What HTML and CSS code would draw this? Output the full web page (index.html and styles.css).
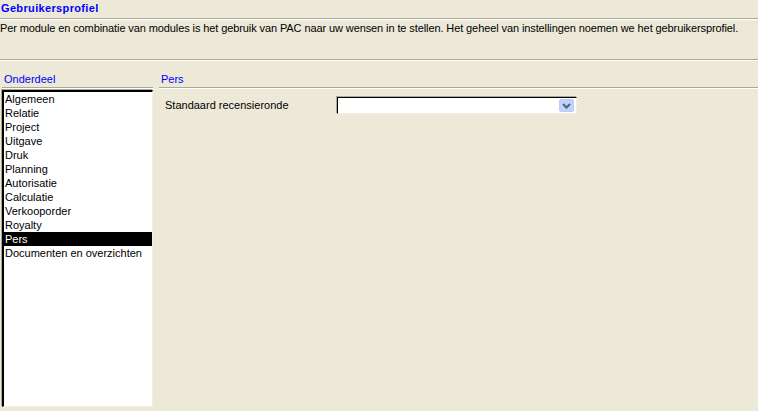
FILE: index.html
```html
<!DOCTYPE html>
<html lang="nl">
<head>
<meta charset="utf-8">
<title>Gebruikersprofiel</title>
<link rel="stylesheet" href="styles.css">
</head>
<body>
<div class="page">
  <div class="title">Gebruikersprofiel</div>
  <div class="desc">Per module en combinatie van modules is het gebruik van PAC naar uw wensen in te stellen. Het geheel van instellingen noemen we het gebruikersprofiel.</div>
  <div class="main">
    <div class="left">
      <div class="sec-head">Onderdeel</div>
      <ul class="listbox">
        <li>Algemeen</li>
        <li>Relatie</li>
        <li>Project</li>
        <li>Uitgave</li>
        <li>Druk</li>
        <li>Planning</li>
        <li>Autorisatie</li>
        <li>Calculatie</li>
        <li>Verkooporder</li>
        <li>Royalty</li>
        <li class="selected">Pers</li>
        <li>Documenten en overzichten</li>
      </ul>
    </div>
    <div class="right">
      <div class="sec-head">Pers</div>
      <div class="form-row">
        <label class="label">Standaard recensieronde</label>
        <div class="combo">
          <div class="combo-value"></div>
          <div class="combo-btn">
            <svg width="9" height="6" viewBox="0 0 9 6"><path d="M1 1 L4.5 4.5 L8 1" fill="none" stroke="#4d6185" stroke-width="2"/></svg>
          </div>
        </div>
      </div>
    </div>
  </div>
</div>
</body>
</html>
```
FILE: styles.css
```css
html, body {
  margin: 0;
  padding: 0;
  background: #ece9d8;
}
body {
  font-family: "Liberation Sans", Arial, sans-serif;
  font-size: 11px;
  line-height: 13px;
  color: #000;
}
.page {
  width: 758px;
  height: 411px;
  display: flex;
  flex-direction: column;
  overflow: hidden;
}
.title {
  height: 19px;
  box-sizing: border-box;
  padding: 2px 0 0 1px;
  font-weight: bold;
  letter-spacing: 0.35px;
  color: #0000ff;
  border-bottom: 1px solid #aca899;
}
.desc {
  height: 41px;
  box-sizing: border-box;
  padding: 2px 0 0 0;
  letter-spacing: -0.1px;
  border-top: 1px solid #ffffff;
  border-bottom: 1px solid #aca899;
}
.main {
  flex: 1;
  display: flex;
  border-top: 1px solid #ffffff;
  min-height: 0;
}
.left {
  width: 151px;
  margin-left: 2px;
  display: flex;
  flex-direction: column;
  padding-bottom: 4px;
}
.right {
  flex: 1;
  margin-left: 6px;
  display: flex;
  flex-direction: column;
}
.sec-head {
  height: 27px;
  box-sizing: border-box;
  padding: 12px 0 0 2px;
  color: #0000ff;
  border-bottom: 1px solid #aca899;
  box-shadow: 0 1px 0 #ffffff;
}
.listbox {
  flex: 1;
  margin: 2px 0 0 0;
  padding: 0;
  list-style: none;
  background: #fff;
  border-top: 2px solid #000;
  border-left: 2px solid #000;
  border-right: 1px solid #f1efe2;
  border-bottom: 1px solid #f1efe2;
  box-shadow: -1px -1px 0 #aca899;
}
.listbox li {
  height: 14px;
  line-height: 14px;
  padding-left: 1px;
  white-space: nowrap;
}
.listbox li.selected {
  background: #000;
  color: #fff;
}
.form-row {
  display: flex;
  align-items: center;
  padding: 9px 0 0 6px;
}
.label {
  width: 172px;
}
.combo {
  width: 240px;
  height: 17px;
  box-sizing: border-box;
  display: flex;
  align-items: center;
  background: #fff;
  border-top: 1px solid #000;
  border-left: 1px solid #000;
  border-right: 1px solid #f1efe2;
  border-bottom: 1px solid #f1efe2;
  box-shadow: -1px -1px 0 #aca899;
  padding-right: 2px;
}
.combo-value {
  flex: 1;
}
.combo-btn {
  width: 15px;
  height: 13px;
  box-sizing: border-box;
  background: #c1d3fb;
  border: 1px solid #b9cdf5;
  border-radius: 2px;
  display: flex;
  align-items: center;
  justify-content: center;
}
```
